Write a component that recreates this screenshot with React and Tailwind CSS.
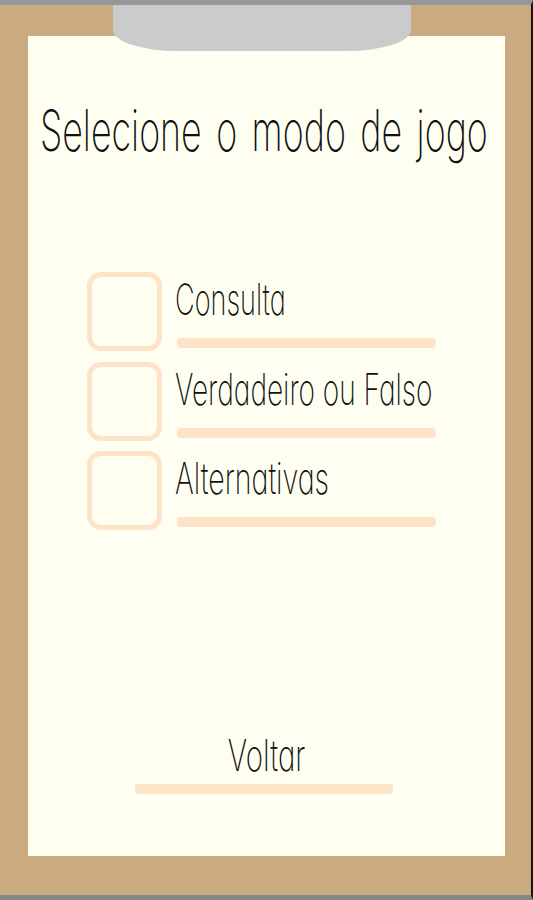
import React from 'react';

const modes = [
  { label: 'Consulta', stretch: 'scale-x-[0.63]' },
  { label: 'Verdadeiro ou Falso', stretch: 'scale-x-[0.652]' },
  { label: 'Alternativas', stretch: 'scale-x-[0.665]' },
];

const ModeOption = ({ label, stretch }) => (
  <div className="flex h-[79px] gap-[15px]">
    <button
      type="button"
      aria-label={label}
      className="h-[79px] w-[75px] shrink-0 rounded-[14px] border-[5px] border-[#fde4c8]"
    />
    <div className="flex w-[259px] flex-col">
      <span
        className={`${stretch} mt-[3px] -ml-[2px] h-[63px] origin-left self-start whitespace-nowrap text-[43px] leading-[48px]`}
      >
        {label}
      </span>
      <div className="h-[10px] rounded-[4px] bg-[#fde4c8]" />
    </div>
  </div>
);

const App = () => {
  return (
    <div className="relative h-[900px] w-[533px] overflow-hidden border-t-[5px] border-r-2 border-b-[5px] border-t-[#979797] border-r-[#17130e] border-b-[#858585] bg-[#caab80] pt-[31px] pl-7 font-['Inter',sans-serif] font-extralight text-[#111] [font-feature-settings:'cv11']">
      <div className="absolute top-0 left-[113px] h-[46px] w-[298px] bg-[#cbcbcb] [border-bottom-left-radius:64px_21px] [border-bottom-right-radius:64px_21px]" />

      <div className="flex h-[820px] w-[477px] flex-col bg-[#fffff1]">
        <h1 className="mt-[60px] ml-3 h-[70px] origin-left scale-x-[0.628] self-start text-[57px] leading-[70px] font-[240] whitespace-nowrap [word-spacing:7px]">
          Selecione o modo de jogo
        </h1>

        <div className="mt-[106px] ml-[59px] flex flex-col gap-[10.5px]">
          {modes.map((mode) => (
            <ModeOption key={mode.label} label={mode.label} stretch={mode.stretch} />
          ))}
        </div>

        <button type="button" className="mt-[201px] ml-[107px] flex w-[258px] flex-col items-center">
          <span className="ml-[5px] h-[53px] scale-x-[0.685] text-[43px] leading-[48px]">Voltar</span>
          <div className="h-[10px] w-full rounded-[3px] bg-[#fde4c8]" />
        </button>
      </div>
    </div>
  );
};

export default App;
